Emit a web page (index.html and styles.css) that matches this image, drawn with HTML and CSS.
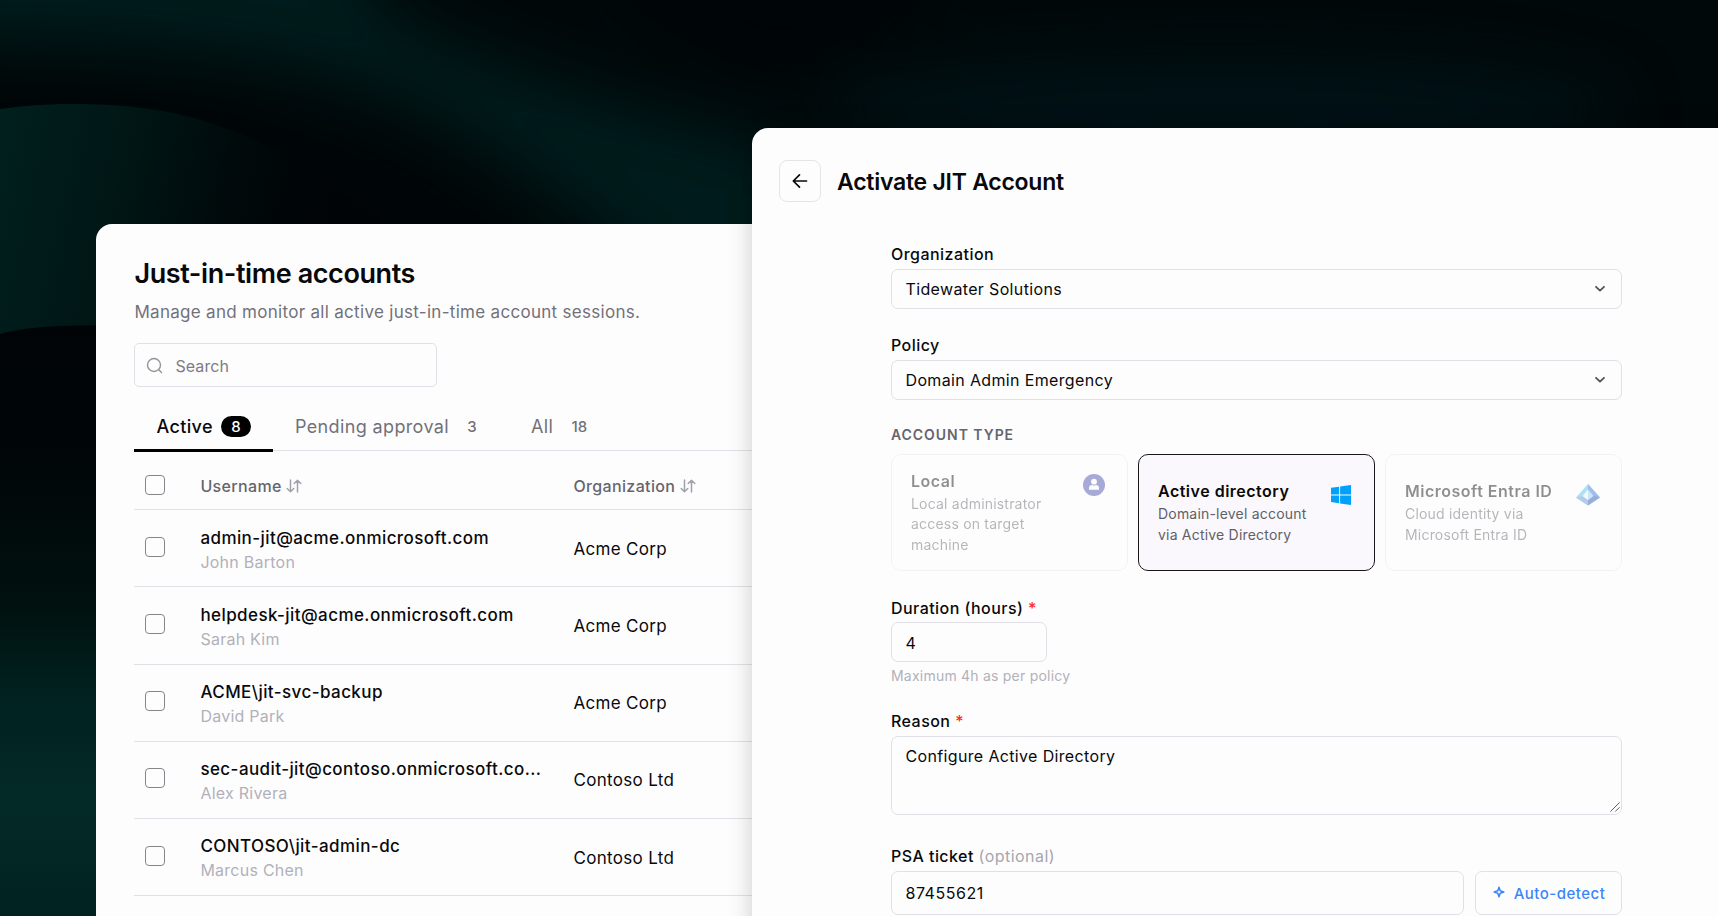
FILE: index.html
```html
<!DOCTYPE html>
<html lang="en">
<head>
  <meta charset="UTF-8">
  <meta name="viewport" content="width=device-width, initial-scale=1">
  <title>Just-in-time accounts</title>
  <link rel="stylesheet" href="styles.css">
</head>
<body>
  <svg class="backdrop" viewBox="0 0 1718 916" preserveAspectRatio="none">
    <defs>
      <linearGradient id="hill" gradientUnits="userSpaceOnUse" x1="0" y1="150" x2="330" y2="220">
        <stop offset="0" stop-color="#001f1d"/>
        <stop offset="0.35" stop-color="#001716"/>
        <stop offset="0.7" stop-color="#00090b"/>
        <stop offset="1" stop-color="#000406"/>
      </linearGradient>
      <linearGradient id="lower" gradientUnits="userSpaceOnUse" x1="0" y1="326" x2="0" y2="916">
        <stop offset="0" stop-color="#000407"/>
        <stop offset="0.25" stop-color="#000709"/>
        <stop offset="0.47" stop-color="#00110f"/>
        <stop offset="0.62" stop-color="#00211f"/>
        <stop offset="0.8" stop-color="#042a27"/>
        <stop offset="1" stop-color="#002321"/>
      </linearGradient>
      <filter id="soft" filterUnits="userSpaceOnUse" x="-200" y="-200" width="2100" height="800" color-interpolation-filters="sRGB">
        <feGaussianBlur stdDeviation="30"/>
      </filter>
    </defs>
    <rect width="1718" height="916" fill="#00080a"/>
    <g filter="url(#soft)">
      <path d="M-150 -150H270L400 20C520 80 640 110 800 150V300H690C580 220 490 130 360 85C240 45 60 40 -150 40Z" fill="#001b1b"/>
      <path d="M-150 110C60 90 200 95 320 140S480 220 560 300H-150Z" fill="#000507"/>
      <path d="M560 -150C580 -20 660 40 780 70C900 50 960 -40 1000 -150Z" fill="#000507"/>
      <ellipse cx="1220" cy="110" rx="400" ry="50" fill="#001215"/>
    </g>
    <path d="M0 109C60 100 140 103 190 117C250 133 330 170 400 240V400H0Z" fill="url(#hill)"/>
    <path d="M0 334C30 326 60 325 140 325V916H0Z" fill="url(#lower)"/>
  </svg>

  <div class="stage">
    <section class="accounts">
      <h1>Just-in-time accounts</h1>
      <p class="subtitle">Manage and monitor all active just-in-time account sessions.</p>

      <div class="search">
        <svg width="18" height="18" viewBox="0 0 18 18"><circle cx="8" cy="8" r="6.5"/><path d="M12.8 12.8L15.5 15.5"/></svg>
        <span>Search</span>
      </div>

      <div class="tabs">
        <div class="tab active">Active <span class="count">8</span></div>
        <div class="tab">Pending approval <span class="count">3</span></div>
        <div class="tab">All <span class="count">18</span></div>
      </div>

      <div class="row head">
        <span class="checkbox"></span>
        <div>Username <svg class="sort" width="16" height="14" viewBox="0 0 16 14"><path d="M4.5 1V12.5M1.2 9.5L4.5 12.8L7.8 9.5M11.5 13V1.5M8.2 4.5L11.5 1.2L14.8 4.5"/></svg></div>
        <div>Organization <svg class="sort" width="16" height="14" viewBox="0 0 16 14"><path d="M4.5 1V12.5M1.2 9.5L4.5 12.8L7.8 9.5M11.5 13V1.5M8.2 4.5L11.5 1.2L14.8 4.5"/></svg></div>
      </div>
      <div class="row">
        <span class="checkbox"></span>
        <div class="user"><b>admin-jit@acme.onmicrosoft.com</b><small>John Barton</small></div>
        <div class="org">Acme Corp</div>
      </div>
      <div class="row">
        <span class="checkbox"></span>
        <div class="user"><b>helpdesk-jit@acme.onmicrosoft.com</b><small>Sarah Kim</small></div>
        <div class="org">Acme Corp</div>
      </div>
      <div class="row">
        <span class="checkbox"></span>
        <div class="user"><b>ACME\jit-svc-backup</b><small>David Park</small></div>
        <div class="org">Acme Corp</div>
      </div>
      <div class="row">
        <span class="checkbox"></span>
        <div class="user"><b>sec-audit-jit@contoso.onmicrosoft.co...</b><small>Alex Rivera</small></div>
        <div class="org">Contoso Ltd</div>
      </div>
      <div class="row">
        <span class="checkbox"></span>
        <div class="user"><b>CONTOSO\jit-admin-dc</b><small>Marcus Chen</small></div>
        <div class="org">Contoso Ltd</div>
      </div>
    </section>

    <section class="activate">
      <header>
        <button class="back"><svg width="16" height="16" viewBox="0 0 16 16"><path d="M14.5 8H1.5M7.5 1.8L1.3 8L7.5 14.2"/></svg></button>
        <h2>Activate JIT Account</h2>
      </header>

      <div class="form">
        <div class="field">
          <label>Organization</label>
          <div class="select">Tidewater Solutions<svg width="12" height="8" viewBox="0 0 12 8"><path d="M2 1.8L6 5.6L10 1.8"/></svg></div>
        </div>
        <div class="field policy">
          <label>Policy</label>
          <div class="select">Domain Admin Emergency<svg width="12" height="8" viewBox="0 0 12 8"><path d="M2 1.8L6 5.6L10 1.8"/></svg></div>
        </div>

        <div class="group-label">ACCOUNT TYPE</div>
        <div class="types">
          <div class="type disabled">
            <div><h3>Local</h3><p>Local administrator<br>access on target<br>machine</p></div>
            <svg class="local" width="22" height="22" viewBox="0 0 22 22"><circle cx="11" cy="11" r="11" fill="#4046a8"/><circle cx="11" cy="7.7" r="2.9" fill="#fff"/><path d="M6 15.8V14C6 12 7.5 11 9 11Q11 12.2 13 11C14.5 11 16 12 16 14V15.8Z" fill="#fff"/></svg>
          </div>
          <div class="type selected">
            <div><h3>Active directory</h3><p>Domain-level account<br>via Active Directory</p></div>
            <svg class="windows" width="20" height="20" viewBox="0 0 20 20"><path fill="#00a1f8" d="M0 2.8L8.1 1.7V9.5H0ZM9.1 1.6L20 0V9.5H9.1ZM0 10.4H8.1V18.2L0 17.1ZM9.1 10.4H20V20L9.1 18.4Z"/></svg>
          </div>
          <div class="type disabled">
            <div><h3>Microsoft Entra ID</h3><p>Cloud identity via<br>Microsoft Entra ID</p></div>
            <svg class="entra" width="24" height="22" viewBox="0 0 24 22"><path fill="#52bdea" d="M12 0L24 13.5L12 21.5L0 13.5Z"/><path fill="#2f74d0" d="M12 0L24 13.5L17 13L12 6Z"/><path fill="#1e4fa8" d="M24 13.5L12 21.5V16L17.5 11.5Z"/><path fill="#5f8fd2" d="M0 13.5L12 21.5V16L6.5 12Z"/><path fill="#d8f5ff" d="M12 5.5L6.5 12L12 16Z"/><path fill="#8fcdf0" d="M12 5.5L17.5 12L12 16Z"/></svg>
          </div>
        </div>

        <div class="field duration">
          <label>Duration (hours) <i>*</i></label>
          <div class="input">4</div>
          <p class="hint">Maximum 4h as per policy</p>
        </div>
        <div class="field reason">
          <label>Reason <i>*</i></label>
          <div class="textarea">Configure Active Directory<svg width="10" height="10" viewBox="0 0 10 10"><path d="M0.7 9.3L9.3 0.7M5.5 9.3L9.3 5.5"/></svg></div>
        </div>
        <div class="field">
          <label>PSA ticket <em>(optional)</em></label>
          <div class="ticket">
            <div class="input">87455621</div>
            <button class="detect"><svg width="12" height="12" viewBox="0 0 12 12"><path d="M6 1.2L7.2 4.8L10.8 6L7.2 7.2L6 10.8L4.8 7.2L1.2 6L4.8 4.8Z"/></svg>Auto-detect</button>
          </div>
        </div>
      </div>
    </section>
  </div>
</body>
</html>
```
FILE: styles.css
```css
* {
  box-sizing: border-box;
}

body {
  margin: 0;
  height: 916px;
  overflow: hidden;
  background: #00080a;
  font-family: Inter, "Liberation Sans", sans-serif;
  color: #09090b;
}

h1, h2, h3, p {
  margin: 0;
}

.backdrop {
  position: absolute;
  width: 100%;
  height: 100%;
}

.stage {
  position: relative;
  display: flex;
  height: 916px;
  overflow: hidden;
}

/* accounts list */
.accounts {
  flex: none;
  width: 656px;
  height: 740px;
  margin: 224px 0 0 96px;
  padding: 33px 0 0 38.4px;
  background: #fefdfe;
  border-radius: 16px 0 0 0;
}

h1 {
  font-size: 27px;
  line-height: 34px;
  font-weight: 600;
  letter-spacing: -0.4px;
}

.subtitle {
  margin-top: 9px;
  font-size: 17px;
  line-height: 24px;
  letter-spacing: 0.3px;
  color: #71717a;
}

.search {
  display: flex;
  align-items: center;
  gap: 11px;
  width: 303px;
  height: 44px;
  margin-top: 19px;
  padding: 1px 0 0 11px;
  border: 1px solid #e0e0e6;
  border-radius: 5px;
  font-size: 16px;
  letter-spacing: 0.1px;
  color: #7c7c84;
}

.search svg {
  fill: none;
  stroke: #94949c;
  stroke-width: 1.4;
}

.tabs {
  display: flex;
  height: 64px;
  border-bottom: 1px solid #e0e0e6;
}

.tab {
  display: flex;
  align-items: center;
  gap: 8px;
  height: 65px;
  padding: 14px 22px 0;
  font-size: 18px;
  letter-spacing: 0.37px;
  color: #71717a;
}

.tab.active {
  padding-top: 17px;
  border-bottom: 3px solid #000;
  font-weight: 500;
  color: #09090b;
}

.count {
  height: 21px;
  padding: 0 10.3px;
  border-radius: 11px;
  font-size: 15px;
  line-height: 21px;
  font-weight: 500;
  letter-spacing: 0;
}

.active .count {
  background: #000;
  color: #fff;
}

.row {
  display: grid;
  grid-template-columns: 66px 373px 1fr;
  height: 77.2px;
  padding-top: 26.5px;
  border-bottom: 1px solid #e0e0e6;
}

.row.head {
  height: 59.3px;
  padding-top: 24px;
  font-size: 16px;
  line-height: 22px;
  font-weight: 500;
  letter-spacing: 0.36px;
  color: #65656d;
}

.checkbox {
  width: 20px;
  height: 20px;
  margin-left: 10.5px;
  border: 1.5px solid #85858b;
  border-radius: 4px;
}

.sort {
  fill: none;
  stroke: #a1a1aa;
  stroke-width: 1.5;
  vertical-align: -1px;
}

.user b,
.user small {
  display: block;
  white-space: nowrap;
}

.user b {
  margin-top: -11.3px;
  font-size: 17px;
  line-height: 24px;
  font-weight: 500;
  letter-spacing: 0.42px;
}

.user small {
  font-size: 16px;
  line-height: 24px;
  letter-spacing: 0.25px;
  color: #b1b1b9;
}

.org {
  margin-top: -1px;
  font-size: 17px;
  line-height: 26px;
  letter-spacing: 0.32px;
}

/* activation form */
.activate {
  flex: 1;
  height: 840px;
  margin-top: 128px;
  background: #fefdfe;
  border-radius: 16px 0 0 0;
  box-shadow: 0 0 24px rgba(0, 0, 0, 0.2);
}

header {
  display: flex;
  align-items: center;
  gap: 16px;
  padding: 32px 0 0 27px;
}

.back {
  display: flex;
  align-items: center;
  justify-content: center;
  width: 42px;
  height: 42px;
  padding: 0;
  background: none;
  border: 1px solid #e4e4e9;
  border-radius: 8px;
}

svg path {
  stroke-linecap: round;
  stroke-linejoin: round;
}

.back svg {
  fill: none;
  stroke: #09090b;
  stroke-width: 1.7;
}

h2 {
  padding-top: 2px;
  font-size: 23px;
  line-height: 32px;
  font-weight: 600;
  letter-spacing: -0.25px;
}

.form {
  width: 731px;
  margin: 41px 0 0 139px;
}

label {
  display: block;
  font-size: 16px;
  line-height: 22px;
  font-weight: 500;
  letter-spacing: 0.46px;
}

label i {
  color: #fb2c1b;
  font-style: normal;
}

label em {
  color: #a6a6ae;
  font-style: normal;
  font-weight: 400;
}

.select,
.input,
.textarea {
  border: 1px solid #e0e0e6;
  border-radius: 7px;
  padding: 0 13.5px;
  font-size: 16px;
  letter-spacing: 0.35px;
}

.select,
.input {
  display: flex;
  align-items: center;
  height: 40px;
  margin-top: 4px;
}

.select {
  justify-content: space-between;
  padding-right: 15px;
}

.select svg {
  fill: none;
  stroke: #52525b;
  stroke-width: 1.8;
}

.policy {
  margin-top: 25px;
}

.group-label {
  margin-top: 26px;
  font-size: 14px;
  line-height: 18px;
  font-weight: 600;
  letter-spacing: 0.95px;
  color: #65656d;
}

.types {
  display: grid;
  grid-template-columns: repeat(3, 1fr);
  gap: 10px;
  margin-top: 10px;
}

.type {
  display: flex;
  align-items: center;
  justify-content: space-between;
  height: 117px;
  padding: 0 22px 0 19px;
  border: 1px solid #e4e4e9;
  border-radius: 10px;
}

.type h3 {
  font-size: 16px;
  line-height: 22px;
  font-weight: 600;
  letter-spacing: 0.5px;
}

.type p {
  margin-top: 2px;
  font-size: 14px;
  line-height: 20.3px;
  letter-spacing: 0.2px;
  color: #5f5f68;
}

.type svg {
  flex: none;
  margin-bottom: 36px;
}

.type .local {
  margin-bottom: 55px;
}

.type .windows {
  margin-right: 1px;
}

.type .entra {
  margin-right: -1px;
}

.type.disabled {
  opacity: 0.45;
}

.selected {
  background: #faf8fc;
  border: 1.5px solid #18181b;
}

.duration {
  margin-top: 26px;
}

.duration .input {
  width: 156px;
  margin-top: 3px;
  padding-top: 1px;
}

.hint {
  margin-top: 4px;
  font-size: 14px;
  line-height: 20px;
  letter-spacing: 0.22px;
  color: #b1b1b9;
}

.reason {
  margin-top: 24px;
}

.textarea {
  display: flex;
  justify-content: space-between;
  height: 79px;
  margin-top: 4px;
  padding: 9px 1px 2px 13.5px;
  line-height: 21px;
}

.textarea svg {
  align-self: flex-end;
  fill: none;
  stroke: #5f5f68;
}

.reason + .field {
  margin-top: 30px;
}

.ticket {
  display: flex;
  gap: 11px;
  margin-top: 4px;
}

.ticket .input {
  flex: 1;
  height: 44px;
  margin: 0;
  letter-spacing: 0.55px;
}

.detect {
  display: flex;
  align-items: center;
  justify-content: center;
  gap: 9px;
  width: 147px;
  height: 44px;
  padding: 0 0 0 1px;
  background: none;
  border: 1px solid #e0e0e6;
  border-radius: 7px;
  font: 500 15px Inter, sans-serif;
  letter-spacing: 0.5px;
  color: #3b86f7;
}

.detect svg {
  margin-bottom: 3px;
  fill: none;
  stroke: #3b86f7;
  stroke-width: 1.5;
}
```
